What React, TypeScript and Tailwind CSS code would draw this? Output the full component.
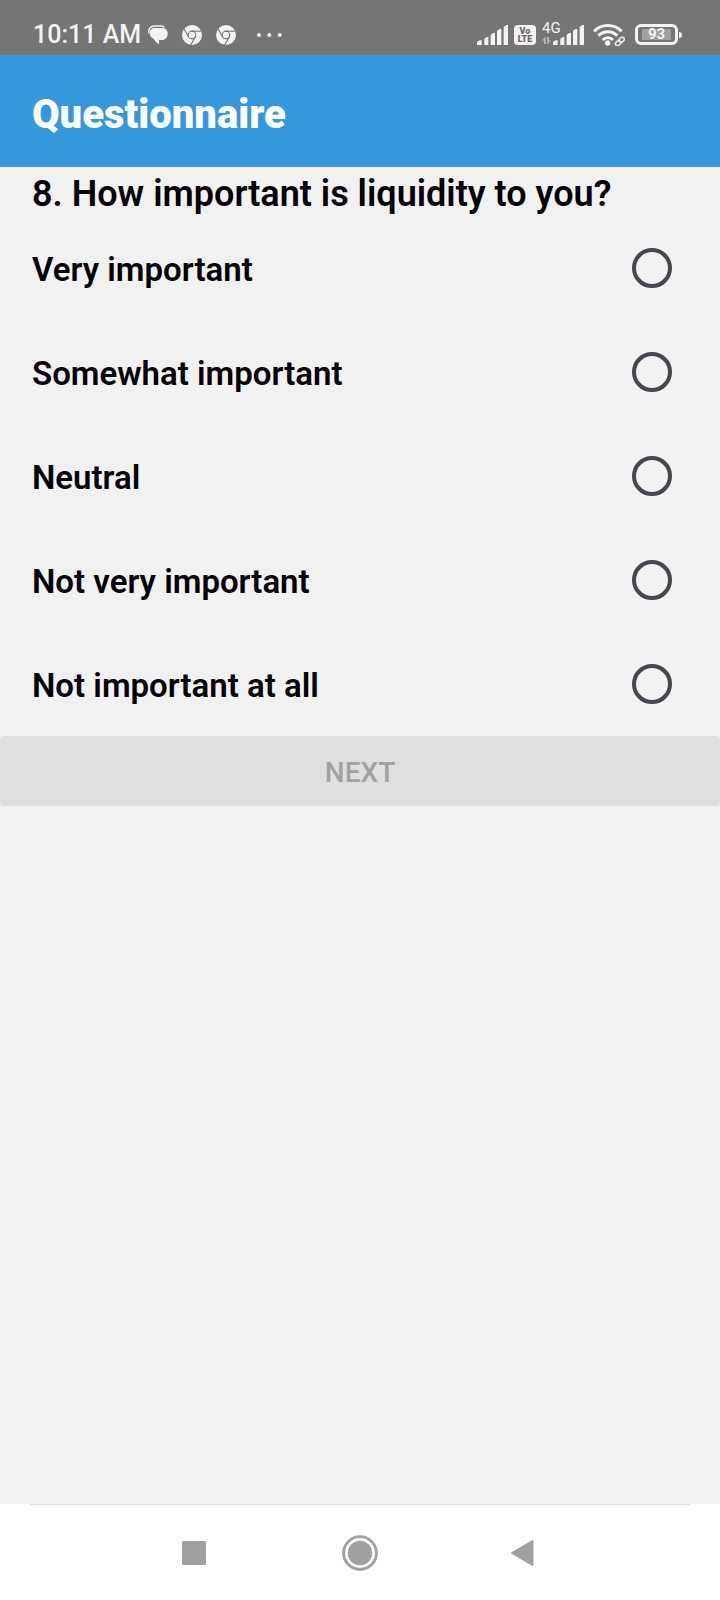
import React from "react";

const OPTIONS = [
  "Very important",
  "Somewhat important",
  "Neutral",
  "Not very important",
  "Not important at all",
];

function SignalIcon() {
  return (
    <svg viewBox="0 0 93 60" className="h-5 w-[31px]" fill="#f3f3f3" aria-hidden="true">
      <path d="M0 60V51L8 46H14V60Z" />
      <path d="M22 60V41L30 36H34V60Z" />
      <path d="M41 60V29L49 24H54V60Z" />
      <path d="M60 60V17L68 12H73V60Z" />
      <path d="M80 60V6L88 0H93V60Z" />
    </svg>
  );
}

function ChatIcon() {
  return (
    <svg viewBox="0 0 60 60" className="size-5" aria-hidden="true">
      <path d="M3 25C0 12 8 3 20 3H40C46 3 48 6 49 8" fill="none" stroke="#f3f3f3" strokeWidth="4" />
      <path
        d="M20 9H42C54 9 59 16 59 27C59 38 52 45 43 45H33V58C24 53 20 45 17 41C9 38 5 32 5 25C5 15 11 9 20 9Z"
        fill="#f3f3f3"
      />
    </svg>
  );
}

function ChromeIcon() {
  return (
    <svg viewBox="0 0 60 60" className="size-5" aria-hidden="true">
      <circle cx="30" cy="30" r="30" fill="#f3f3f3" />
      <g fill="none" stroke="#757575" strokeWidth="3.4">
        <circle cx="30" cy="30" r="11.5" />
        <path d="M30 18.5H58" />
        <path d="M20 35.8L6 11.5" />
        <path d="M40 35.8L26 60" />
      </g>
    </svg>
  );
}

function WifiIcon() {
  return (
    <svg viewBox="0 0 96 66" className="h-[22px] w-8" aria-hidden="true">
      <g fill="none" stroke="#f3f3f3" strokeWidth="9">
        <path d="M3 22C26 -1 63 -1 86 22" />
        <path d="M16 35C32 19 57 19 73 35" />
        <path d="M29 48C38 39 51 39 60 48" />
      </g>
      <circle cx="44" cy="57" r="8" fill="#f3f3f3" />
      <g fill="none" stroke="#757575" strokeWidth="12" strokeLinecap="round">
        <path d="M72 60L88 44" />
      </g>
      <g fill="none" stroke="#e6e6e6" strokeWidth="5">
        <rect x="-11" y="-6" width="17" height="12" rx="6" transform="translate(77 56) rotate(-42)" />
        <rect x="-6" y="-6" width="17" height="12" rx="6" transform="translate(84 49) rotate(-42)" />
      </g>
    </svg>
  );
}

function DataArrowsIcon() {
  return (
    <svg viewBox="0 0 28 22" className="mb-px h-[7px] w-[9px]" fill="#b5b5b5" aria-hidden="true">
      <path d="M6 22V11H0L10 0H12V22Z" />
      <path d="M16 0H22V11H28L18 22H16Z" />
    </svg>
  );
}

function StatusBar() {
  return (
    <div className="flex h-[55px] items-center justify-between bg-[#757575] pt-[14px] pr-[38px] pl-[33px] text-[#f3f3f3]">
      <div className="flex items-center">
        <span className="w-[115px] pt-px text-[25px] leading-8 font-medium whitespace-nowrap">10:11 AM</span>
        <div className="flex items-center gap-[14px]">
          <ChatIcon />
          <ChromeIcon />
          <ChromeIcon />
        </div>
        <svg viewBox="0 0 75 12" className="ml-[21px] h-1 w-[25px]" fill="#f3f3f3" aria-hidden="true">
          <circle cx="6" cy="6" r="6" />
          <circle cx="37" cy="6" r="6" />
          <circle cx="68" cy="6" r="6" />
        </svg>
      </div>
      <div className="flex items-center">
        <SignalIcon />
        <div className="ml-[6px] flex h-5 w-[22px] flex-col items-center justify-center rounded bg-[#f3f3f3] text-[9px] leading-[8px] font-black text-[#666666]">
          <span>Vo</span>
          <span>LTE</span>
        </div>
        <div className="relative ml-[6px] flex items-end gap-[2px]">
          <span className="absolute -top-[5px] left-0 text-[15px] leading-4">4G</span>
          <DataArrowsIcon />
          <SignalIcon />
        </div>
        <div className="ml-[9px]">
          <WifiIcon />
        </div>
        <div className="ml-[10px] flex items-center gap-px">
          <div className="flex h-[21px] w-[43px] items-center justify-center rounded-md border-3 border-[#f3f3f3]">
            <span className="flex h-[11px] w-[29px] items-center justify-center bg-[#a0a0a0] text-[15px] leading-none font-bold">
              93
            </span>
          </div>
          <div className="h-[6px] w-[3px] rounded-r-sm bg-[#f3f3f3]" />
        </div>
      </div>
    </div>
  );
}

function NavigationBar() {
  return (
    <nav className="bg-white">
      <div className="mx-[30px] h-px bg-[#dedede]" />
      <div className="flex h-[95px] items-center justify-center gap-[118px]">
        <button type="button" aria-label="Recent apps" className="flex size-12 items-center justify-center">
          <svg viewBox="0 0 24 24" className="size-6" fill="#a0a0a0">
            <rect width="24" height="24" rx="1.5" />
          </svg>
        </button>
        <button type="button" aria-label="Home" className="flex size-12 items-center justify-center">
          <svg viewBox="0 0 36 36" className="size-9" fill="#a0a0a0">
            <circle cx="18" cy="18" r="16.4" fill="none" stroke="#a0a0a0" strokeWidth="2.8" />
            <circle cx="18" cy="18" r="12.2" />
          </svg>
        </button>
        <button type="button" aria-label="Back" className="flex size-12 items-center justify-center pr-2">
          <svg viewBox="0 0 24 28" className="h-7 w-6" fill="#a0a0a0" stroke="#a0a0a0" strokeWidth="2" strokeLinejoin="round">
            <path d="M2 14L22.500 2V26Z" />
          </svg>
        </button>
      </div>
    </nav>
  );
}

export default function App() {
  return (
    <div className="flex min-h-screen flex-col bg-[#f1f1f1] font-[Roboto,sans-serif] text-black">
      <StatusBar />
      <header className="flex h-28 items-center bg-[#3498db] px-8 pt-2">
        <h1 className="text-[40px] leading-[48px] font-black text-white">Questionnaire</h1>
      </header>
      <main className="grow">
        <fieldset>
          <legend className="px-8 pt-[5px] text-4xl leading-[44px] font-semibold">
            8. How important is liquidity to you?
          </legend>
          {OPTIONS.map((option) => (
            <label key={option} className="flex h-[104px] items-center justify-between pr-12 pl-8">
              <span className="pt-1 text-[33px] leading-10 font-semibold">{option}</span>
              <input
                type="radio"
                name="liquidity"
                value={option}
                className="size-10 appearance-none rounded-full border-4 border-[#49454f] checked:border-[12px]"
              />
            </label>
          ))}
        </fieldset>
        <button
          type="button"
          disabled
          className="flex h-[70px] w-full items-center justify-center rounded bg-[#dfdfdf] pt-1 text-[28px] leading-8 font-medium text-[#a1a1a1]"
        >
          NEXT
        </button>
      </main>
      <NavigationBar />
    </div>
  );
}
